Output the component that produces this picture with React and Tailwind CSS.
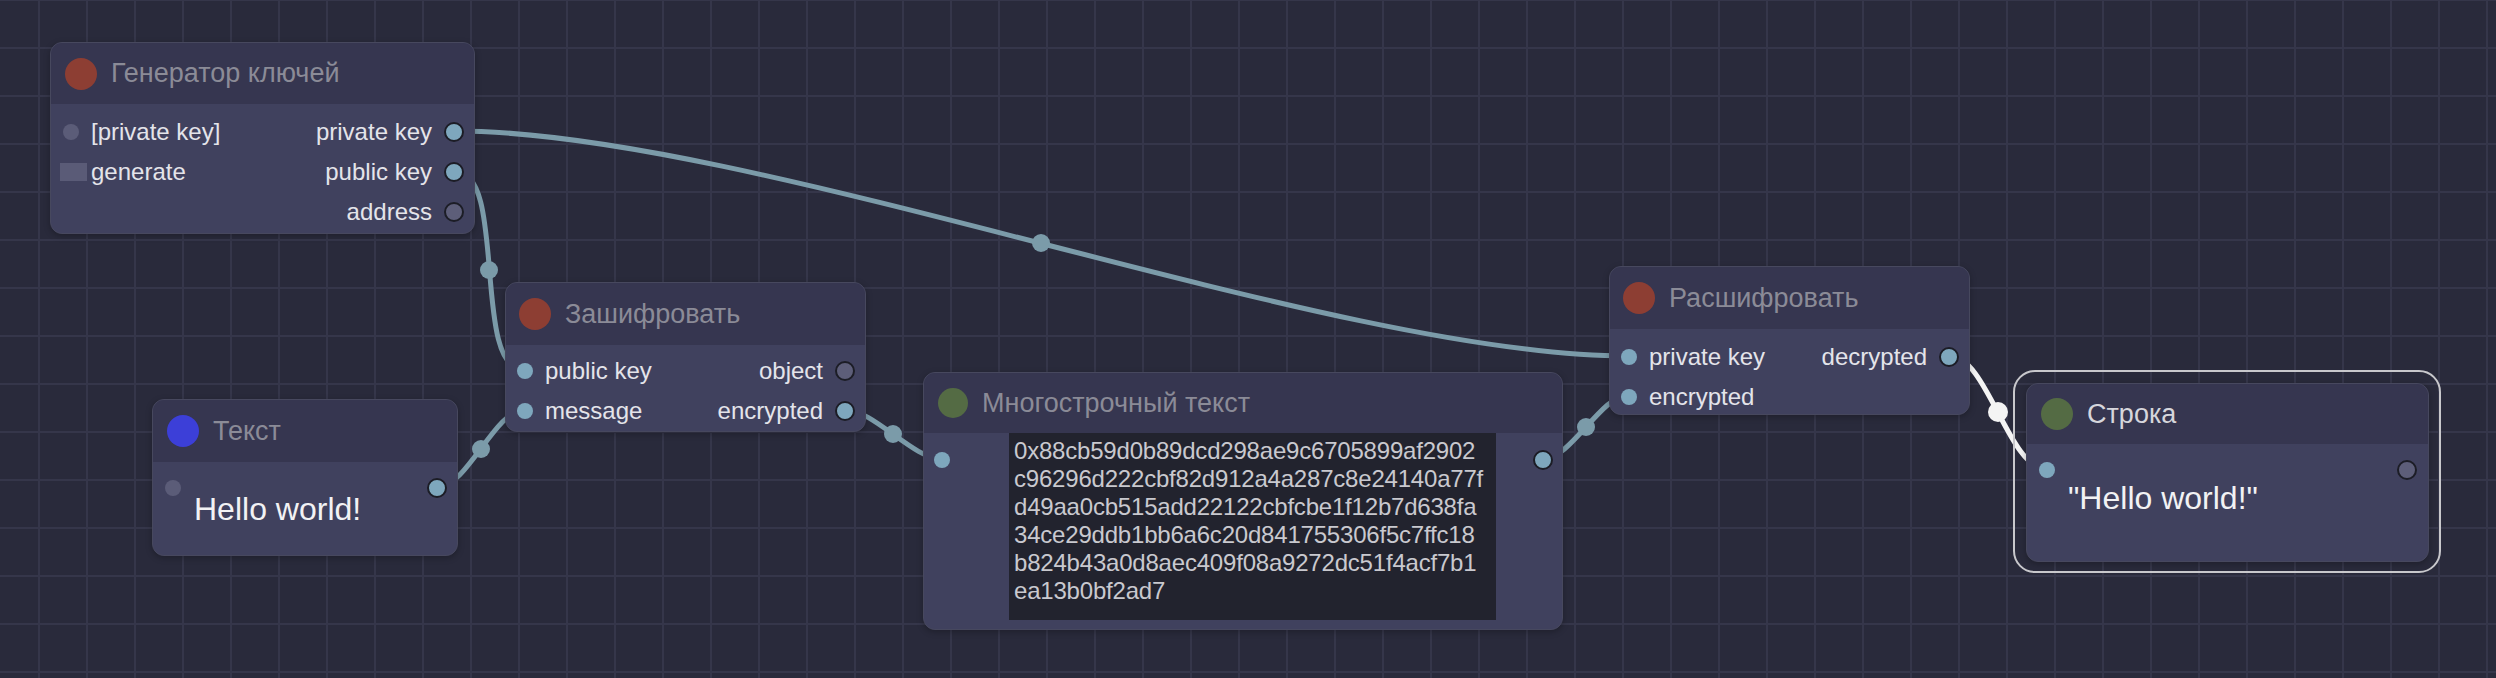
import React from "react";

const FONT = "font-['Liberation_Sans','Arial',sans-serif]";

function InDot({ on }) {
  return (
    <span
      className={
        "block w-4 h-4 rounded-full shrink-0 " +
        (on ? "bg-[#7ea7bd]" : "bg-[#5b5c78]")
      }
    />
  );
}

function OutDot({ on }) {
  return (
    <span
      className={
        "block w-5 h-5 rounded-full shrink-0 border-2 border-[#1c1d26] " +
        (on ? "bg-[#7ea7bd]" : "bg-[#5d5e79]")
      }
    />
  );
}

function Node({ pos, headerH, dot, title, selected, children }) {
  return (
    <div
      className={
        "absolute flex flex-col overflow-hidden rounded-[12px] border border-[#47485e] bg-[#40415e] shadow-[0_2px_6px_rgba(0,0,0,0.25)] " +
        pos
      }
    >
      <div className={"flex items-center bg-[#363650] shrink-0 " + headerH}>
        <span className={"block rounded-full shrink-0 " + dot} />
        <span
          className={
            "text-[27px] leading-none whitespace-nowrap " +
            (selected ? "text-[#d6d6dc]" : "text-[#8b8b97]")
          }
        >
          {title}
        </span>
      </div>
      <div className="flex-1 flex flex-col">{children}</div>
    </div>
  );
}

function Row({ left, right }) {
  return (
    <div className="flex h-10 items-center justify-between text-[24px] text-[#e4e4ea]">
      <div className="flex items-center">{left}</div>
      <div className="flex items-center">{right}</div>
    </div>
  );
}

function Wires() {
  const c = "#7b9ba9";
  return (
    <svg
      className="absolute left-0 top-0"
      width="2496"
      height="678"
      viewBox="0 0 2496 678"
    >
      <g fill="none" stroke={c} strokeWidth="5" strokeLinecap="round">
        <path d="M455 131 C753 131 1330 356 1628 356" />
        <path d="M455 171 C508 171 471 370 524 370" />
        <path d="M438 487 C467 487 495 410 524 410" />
        <path d="M846 410 C873 410 914 459 941 459" />
        <path d="M1544 459 C1570 459 1602 395 1628 395" />
      </g>
      <path
        d="M1950 356 C1987 356 2009 469 2046 469"
        fill="none"
        stroke="#f4f4f4"
        strokeWidth="5"
        strokeLinecap="round"
      />
      <g fill={c}>
        <circle cx="1041" cy="243" r="9" />
        <circle cx="489" cy="270" r="9" />
        <circle cx="481" cy="449" r="9" />
        <circle cx="893" cy="434" r="9" />
        <circle cx="1586" cy="427" r="9" />
      </g>
      <circle cx="1998" cy="412" r="10" fill="#f4f4f4" />
    </svg>
  );
}

export default function App() {
  return (
    <div
      className={
        "relative w-[2496px] h-[678px] overflow-hidden bg-[#292a3b] " +
        "bg-[linear-gradient(to_right,#35364a_2px,transparent_2px),linear-gradient(to_bottom,#35364a_2px,transparent_2px)] " +
        "bg-[size:48px_48px] bg-[position:38px_-1px] " +
        FONT
      }
    >
      <Wires />

      {/* Генератор ключей */}
      <Node
        pos="left-[50px] top-[42px] w-[425px] h-[192px]"
        headerH="h-[61px]"
        dot="w-8 h-8 ml-[14px] mr-[14px] bg-[#8d3e33]"
        title="Генератор ключей"
      >
        <div className="pt-2">
          <Row
            left={
              <>
                <span className="ml-3" />
                <InDot />
                <span className="ml-3">[private key]</span>
              </>
            }
            right={
              <>
                <span className="mr-3">private key</span>
                <OutDot on />
                <span className="mr-[10px]" />
              </>
            }
          />
          <Row
            left={
              <>
                <span className="block ml-[9px] w-[27px] h-[18px] bg-[#5a5b77]" />
                <span className="ml-1">generate</span>
              </>
            }
            right={
              <>
                <span className="mr-3">public key</span>
                <OutDot on />
                <span className="mr-[10px]" />
              </>
            }
          />
          <Row
            left={null}
            right={
              <>
                <span className="mr-3">address</span>
                <OutDot />
                <span className="mr-[10px]" />
              </>
            }
          />
        </div>
      </Node>

      {/* Текст */}
      <Node
        pos="left-[152px] top-[399px] w-[306px] h-[157px]"
        headerH="h-[62px]"
        dot="w-8 h-8 ml-[14px] mr-[14px] bg-[#3c3fd8]"
        title="Текст"
      >
        <div className="flex items-start pt-[18px]">
          <span className="ml-3" />
          <InDot />
          <span className="ml-[13px] mt-[11px] text-[32px] leading-[37px] text-[#f2f2f4] whitespace-nowrap">
            Hello world!
          </span>
          <span className="flex-1" />
          <span className="-mt-[2px] mr-[10px]">
            <OutDot on />
          </span>
        </div>
      </Node>

      {/* Зашифровать */}
      <Node
        pos="left-[505px] top-[282px] w-[361px] h-[150px]"
        headerH="h-[62px]"
        dot="w-8 h-8 ml-[13px] mr-[14px] bg-[#8d3e33]"
        title="Зашифровать"
      >
        <div className="pt-[6px]">
          <Row
            left={
              <>
                <span className="ml-[11px]" />
                <InDot on />
                <span className="ml-3">public key</span>
              </>
            }
            right={
              <>
                <span className="mr-3">object</span>
                <OutDot />
                <span className="mr-[10px]" />
              </>
            }
          />
          <Row
            left={
              <>
                <span className="ml-[11px]" />
                <InDot on />
                <span className="ml-3">message</span>
              </>
            }
            right={
              <>
                <span className="mr-3">encrypted</span>
                <OutDot on />
                <span className="mr-[10px]" />
              </>
            }
          />
        </div>
      </Node>

      {/* Многострочный текст */}
      <Node
        pos="left-[923px] top-[372px] w-[640px] h-[258px]"
        headerH="h-[60px]"
        dot="w-[30px] h-[30px] ml-[14px] mr-[14px] bg-[#546b44]"
        title="Многострочный текст"
      >
        <div className="flex items-start">
          <span className="ml-[10px] mt-[19px]">
            <InDot on />
          </span>
          <div className="ml-[59px] w-[487px] h-[187px] bg-[#22232e] pl-[5px] pt-[4px] text-[24px] leading-[28px] text-[#c9c9cf] tracking-[-0.2px] whitespace-nowrap">
            <div>0x88cb59d0b89dcd298ae9c6705899af2902</div>
            <div>c96296d222cbf82d912a4a287c8e24140a77f</div>
            <div>d49aa0cb515add22122cbfcbe1f12b7d638fa</div>
            <div>34ce29ddb1bb6a6c20d841755306f5c7ffc18</div>
            <div>b824b43a0d8aec409f08a9272dc51f4acf7b1</div>
            <div>ea13b0bf2ad7</div>
          </div>
          <span className="flex-1" />
          <span className="mt-[17px] mr-[9px]">
            <OutDot on />
          </span>
        </div>
      </Node>

      {/* Расшифровать */}
      <Node
        pos="left-[1609px] top-[266px] w-[361px] h-[149px]"
        headerH="h-[62px]"
        dot="w-8 h-8 ml-[13px] mr-[14px] bg-[#8d3e33]"
        title="Расшифровать"
      >
        <div className="pt-2">
          <Row
            left={
              <>
                <span className="ml-[11px]" />
                <InDot on />
                <span className="ml-3">private key</span>
              </>
            }
            right={
              <>
                <span className="mr-3">decrypted</span>
                <OutDot on />
                <span className="mr-[10px]" />
              </>
            }
          />
          <Row
            left={
              <>
                <span className="ml-[11px]" />
                <InDot on />
                <span className="ml-3">encrypted</span>
              </>
            }
            right={null}
          />
        </div>
      </Node>

      {/* selection outline */}
      <div className="absolute left-[2013px] top-[370px] w-[428px] h-[203px] rounded-[22px] border-2 border-[#c8c8cc]" />

      {/* Строка */}
      <Node
        pos="left-[2026px] top-[383px] w-[403px] h-[179px]"
        headerH="h-[60px]"
        dot="w-8 h-8 ml-[14px] mr-[14px] bg-[#546b44]"
        title="Строка"
        selected
      >
        <div className="flex items-start pt-[18px]">
          <span className="ml-3" />
          <InDot on />
          <span className="ml-[13px] mt-[18px] text-[32px] leading-[37px] text-[#f2f2f4] whitespace-nowrap">
            "Hello world!"
          </span>
          <span className="flex-1" />
          <span className="-mt-[2px] mr-[11px]">
            <OutDot />
          </span>
        </div>
      </Node>
    </div>
  );
}
